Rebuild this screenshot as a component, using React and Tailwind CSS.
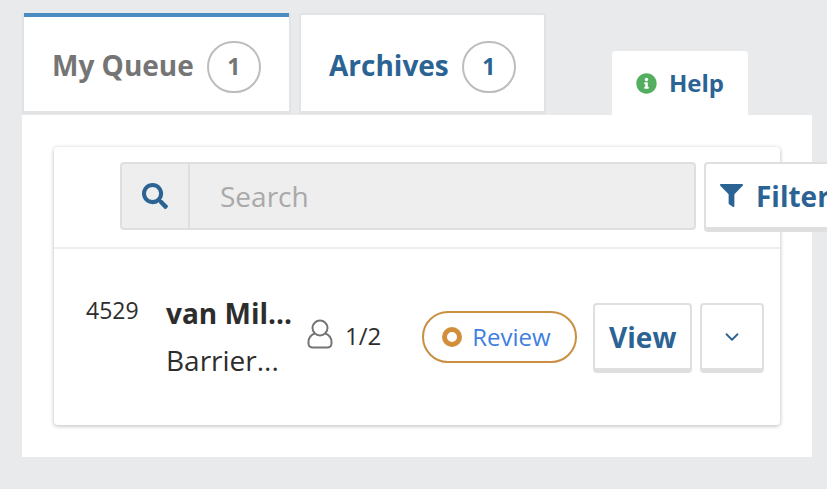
import { ChevronDown } from 'lucide-react'
import { FaFilter, FaInfoCircle, FaSearch } from 'react-icons/fa'

function Contador({ cor, margem }) {
  return (
    <span className={`flex h-[52px] w-[54px] items-center justify-center rounded-full border-2 border-[#bdbdbd] text-[23px] font-bold ${margem} ${cor}`}>
      1
    </span>
  )
}

function Usuario() {
  return (
    <svg width="26" height="30" viewBox="0 0 26 30" fill="none" stroke="#757575" strokeWidth="2">
      <ellipse cx="13" cy="9" rx="7.500" ry="7.500" />
      <path d="M7.500 14.500C4 16 1.500 19 1.500 23v1.500c0 2.500 2 4 4 4h15c2 0 4-1.500 4-4V23c0-4-2.500-7-6-8.500" />
    </svg>
  )
}

export default function App() {
  return (
    <div className="h-[489px] w-[827px] overflow-hidden bg-[#e9eaec] pl-[22px] pt-[13px] font-['Open_Sans',sans-serif]">
      <div className="w-[790px]">
        <div className="flex h-[102px] items-start">
          <div className="flex h-[101px] w-[269px] flex-col border-x-[2px] border-b-[3px] border-[#e2e3e5] bg-white text-[#757575]">
            <div className="h-[4px] bg-[#4a8bc2]" />
            <div className="flex flex-1 items-center pl-[28px] pt-[5px]">
              <span className="mb-[4px] text-[28px] font-bold leading-none">My Queue</span>
              <Contador cor="text-[#757575]" margem="ml-[13px]" />
            </div>
          </div>
          <div className="ml-[8px] flex h-[101px] w-[247px] items-center rounded-t-[3px] border-x-[2px] border-b-[3px] border-t-[2px] border-[#e2e3e5] bg-white pl-[28px] pt-[7px] text-[#2b6494]">
            <span className="mb-[4px] text-[28px] font-bold leading-none">Archives</span>
            <Contador cor="text-[#2b6494]" margem="ml-[13px]" />
          </div>
          <div className="ml-[66px] flex h-[64px] w-[136px] items-center self-end rounded-t-[4px] bg-white pl-[24px]">
            <FaInfoCircle className="text-[21px] text-[#53ae5f]" />
            <span className="ml-[12px] text-[24px] font-bold leading-none text-[#2b6494]">Help</span>
          </div>
        </div>
        <div className="h-[342px] bg-white px-[32px] pt-[32px]">
          <div className="h-[278px] w-[726px] rounded-[4px] bg-white shadow-[0_1px_4px_rgba(0,0,0,0.28)]">
            <div className="flex h-[102px] border-b-2 border-[#eeeeee] pl-[66px] pt-[15px]">
              <div className="flex h-[68px] w-[576px] shrink-0 rounded-[4px] border-2 border-[#dfdfdf] bg-[#eeeeee]">
                <div className="flex w-[68px] items-center justify-center border-r-2 border-[#dfdfdf]">
                  <FaSearch className="text-[26px] text-[#2b6494]" />
                </div>
                <span className="ml-[30px] self-center text-[28px] leading-none text-[#a9a9a9]">Search</span>
              </div>
              <div className="ml-[8px] flex h-[70px] w-[160px] shrink-0 items-center rounded-[4px] border-2 border-b-[5px] border-[#dfdfdf] bg-white pl-[14px]">
                <FaFilter className="text-[23px] text-[#2b6494]" />
                <span className="ml-[13px] text-[28px] font-bold leading-none text-[#2b6494]">Filter</span>
              </div>
            </div>
            <div className="flex h-[176px] items-start">
              <span className="ml-[32px] mt-[50px] w-[80px] text-[23px] leading-none text-[#2d2d2d]">4529</span>
              <div className="mt-[46px] w-[134px]">
                <div className="text-[28px] font-bold leading-[36px] text-[#2d2d2d]">van Mil...</div>
                <div className="mt-[11px] text-[28px] leading-[36px] text-[#2d2d2d]">Barrier...</div>
              </div>
              <div className="ml-[7px] mt-[70px] flex items-center">
                <Usuario />
                <span className="ml-[12px] mt-[4px] text-[24px] leading-none text-[#2d2d2d]">1/2</span>
              </div>
              <div className="ml-[41px] mt-[62px] flex h-[52px] w-[155px] items-center rounded-full border-2 border-[#c98f42] pl-[18px]">
                <span className="h-[20px] w-[20px] rounded-full border-[5px] border-[#d18f3c]" />
                <span className="ml-[10px] text-[24px] leading-none text-[#3f7fe0]">Review</span>
              </div>
              <div className="ml-[16px] mt-[54px] flex h-[70px] w-[99px] items-center justify-center rounded-[4px] border-2 border-b-[5px] border-[#dfdfdf] bg-white text-[28px] font-bold text-[#2b6494]">
                View
              </div>
              <div className="ml-[8px] mt-[54px] flex h-[70px] w-[64px] items-center justify-center rounded-[4px] border-2 border-b-[5px] border-[#dfdfdf] bg-white">
                <ChevronDown size={22} className="text-[#2b6494]" />
              </div>
            </div>
          </div>
        </div>
      </div>
    </div>
  )
}
